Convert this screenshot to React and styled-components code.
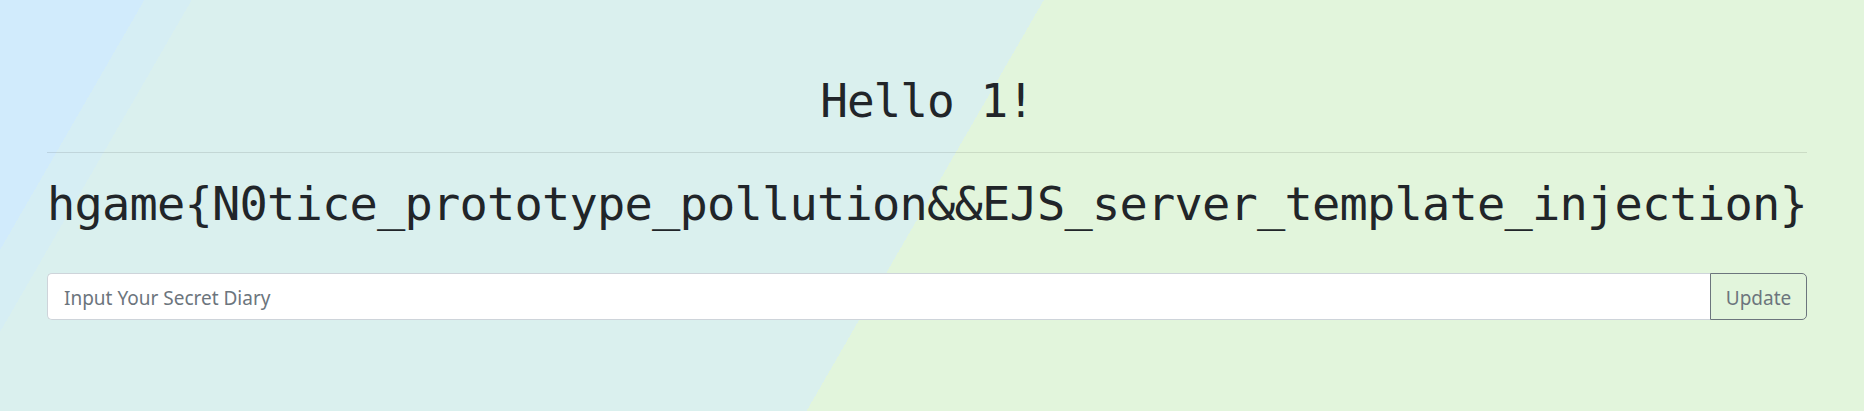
import React, { useState } from "react";
import styled, { createGlobalStyle } from "styled-components";

const GlobalStyle = createGlobalStyle`
  html, body {
    margin: 0;
    padding: 0;
  }
  body {
    font-family: "Noto Sans", "Liberation Sans", sans-serif;
    color: #212529;
  }
`;

const Page = styled.div`
  min-height: 100vh;
  box-sizing: border-box;
  padding: 74px 57px 0 47px;
  background: linear-gradient(
    120deg,
    #d1ebfc 0px,
    #d1ebfc 125px,
    #d6eef4 125px,
    #d6eef4 166px,
    #daf0ee 166px,
    #daf0ee 904px,
    #e2f5dc 904px,
    #e2f5dc 100%
  );
`;

const Title = styled.h1`
  margin: 0;
  font-family: "DejaVu Sans Mono", "Liberation Mono", monospace;
  font-weight: 400;
  font-size: 46px;
  letter-spacing: -1px;
  line-height: 55px;
  text-align: center;
`;

const Divider = styled.hr`
  margin: 23px 0 0;
  border: 0;
  border-top: 1px solid rgba(0, 0, 0, 0.1);
`;

const Flag = styled.h2`
  margin: 23px 0 0;
  font-family: "DejaVu Sans Mono", "Liberation Mono", monospace;
  font-weight: 400;
  font-size: 47px;
  letter-spacing: -0.8px;
  line-height: 56px;
  white-space: nowrap;
  text-align: center;
`;

const InputGroup = styled.form`
  display: flex;
  margin-top: 41px;
  height: 47px;
`;

const Field = styled.input`
  flex: 1;
  min-width: 0;
  box-sizing: border-box;
  height: 100%;
  padding: 2px 16px 0;
  font-family: "Noto Sans", "Liberation Sans", sans-serif;
  font-size: 19px;
  color: #495057;
  background: #fff;
  border: 1px solid #ced4da;
  border-right: 0;
  border-radius: 5px 0 0 5px;
  outline: none;

  &::placeholder {
    color: #6c757d;
  }
`;

const Button = styled.button`
  box-sizing: border-box;
  height: 100%;
  width: 97px;
  padding: 2px 0 0;
  font-family: "Noto Sans", "Liberation Sans", sans-serif;
  font-size: 19px;
  color: #6c757d;
  background: transparent;
  border: 1px solid #6c757d;
  border-radius: 0 5px 5px 0;
  cursor: pointer;
`;

const App = () => {
  const [diary, setDiary] = useState("");

  return (
    <Page>
      <GlobalStyle />
      <Title>Hello 1!</Title>
      <Divider />
      <Flag>hgame{"{"}N0tice_prototype_pollution&amp;&amp;EJS_server_template_injection{"}"}</Flag>
      <InputGroup onSubmit={(e) => e.preventDefault()}>
        <Field
          placeholder="Input Your Secret Diary"
          value={diary}
          onChange={(e) => setDiary(e.target.value)}
        />
        <Button type="submit">Update</Button>
      </InputGroup>
    </Page>
  );
};

export default App;
